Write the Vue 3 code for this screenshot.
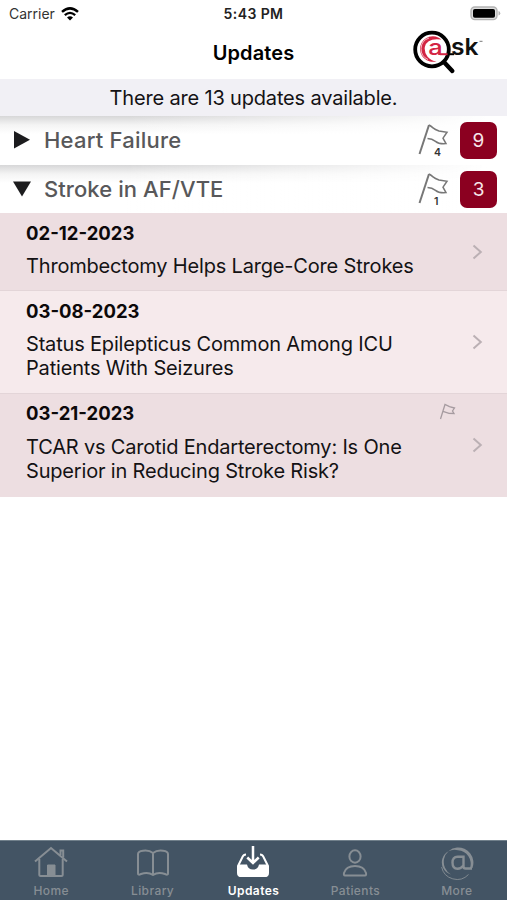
<template>
    <div class="screen">
        <div class="status-bar">
            <div class="carrier">
                <span class="carrier-name">Carrier</span>
                <svg class="wifi" width="18" height="14" viewBox="0 0 18 14">
                    <path d="M1 4.9 Q9 -2.1 17 4.9" fill="none" stroke="#000" stroke-width="2.5" />
                    <path d="M3.8 8.2 Q9 3.6 14.2 8.2" fill="none" stroke="#000" stroke-width="2.3" />
                    <path d="M9 13.6 L6 10.5 Q9 8 12 10.5 Z" />
                </svg>
            </div>
            <div class="time">5:43 PM</div>
            <div class="battery">
                <svg width="31" height="15" viewBox="0 0 31 15">
                    <rect x="1" y="1" width="26" height="12.6" rx="3.8" fill="#ddd" stroke="#b3b3b3" stroke-width="1.4" />
                    <rect x="3" y="3" width="22" height="8.8" rx="1.8" />
                    <path d="M28.5 5 Q30.3 5.6 30.3 7.3 Q30.3 9 28.5 9.6 Z" fill="#b3b3b3" />
                </svg>
            </div>
        </div>

        <div class="nav-bar">
            <h1 class="title">Updates</h1>
            <svg class="logo" width="72" height="46" viewBox="0 0 72 46">
                <path d="M31 31 L40.3 41" stroke="#000" stroke-width="4.4" stroke-linecap="round" />
                <circle cx="20" cy="19.5" r="16.8" fill="#fff" stroke="#000" stroke-width="3.8" />
                <path d="M29.5 9.5 A12.8 12.8 0 1 0 24.5 31.2 A12.6 12.6 0 0 1 12.8 17 Q15 7.5 29.5 9.5 Z" fill="#d32543" />
                <path d="M17 8 A11.5 11.5 0 0 0 16 29.5" fill="none" stroke="#fff" stroke-width="0.7" />
                <text class="logo-a" x="16.2" y="25" textLength="14.5" lengthAdjust="spacingAndGlyphs">a</text>
                <path d="M28 24.2 H35.5" stroke="#d32543" stroke-width="2" />
                <path d="M36 24.2 H42" stroke="#000" stroke-width="2" />
                <text class="logo-sk" x="39" y="25.2" textLength="27.5" lengthAdjust="spacingAndGlyphs">sk</text>
                <path d="M67.5 11.3 H70.5" stroke="#777" stroke-width="1" />
            </svg>
        </div>

        <div class="banner"><span>There are 13 updates available.</span></div>

        <template v-for="section in sections" :key="section.name">
            <div class="section" @click="section.open = !section.open">
                <svg class="arrow" width="20" height="20" viewBox="0 0 20 20">
                    <path v-if="section.open" d="M1 2.6 H19 L10 17.4 Z" />
                    <path v-else d="M2 1 L18 9.8 L2 18.6 Z" />
                </svg>
                <span class="section-name" :class="section.cls">{{ section.name }}</span>
                <div class="flag">
                    <svg width="32" height="34" viewBox="0 0 32 34">
                        <path d="M2.5 31 L12 2" stroke="#777" stroke-width="2" fill="none" />
                        <path d="M12 2 Q14 3.2 16 4.9 T22 8 L30 9.2 L26 15.2 L29 20.6 Q22 21.2 18.5 18.3 T10.5 15.4" stroke="#777" stroke-width="1.5" fill="none" />
                    </svg>
                    <span class="flag-count">{{ section.flagged }}</span>
                </div>
                <span class="badge">{{ section.count }}</span>
            </div>
            <template v-if="section.open">
                <div v-for="(item, index) in section.items" :key="item.date" class="item" :class="{ light: index % 2 === 1, last: index === section.items.length - 1 }">
                    <div class="item-body">
                        <div class="date">{{ item.date }}</div>
                        <div class="headline">
                            <div v-for="line in item.lines" :key="line">{{ line }}</div>
                        </div>
                    </div>
                    <svg v-if="item.flagged" class="item-flag" width="17" height="17" viewBox="0 0 17 17">
                        <path d="M1.5 16 L6 1.5 L10.5 3.6 L15.5 5 L13.5 8 L15 10.5 L10 10.3 L4 8.4" stroke="#a69ba0" stroke-width="1.3" fill="none" />
                    </svg>
                    <svg class="chevron" width="11" height="16" viewBox="0 0 11 16">
                        <path d="M1.5 1.5 L8.8 8 L1.5 14.5" stroke="#bbb0b4" stroke-width="2" fill="none" />
                    </svg>
                </div>
            </template>
        </template>

        <div class="tab-bar">
            <div v-for="tab in tabs" :key="tab" class="tab" :class="{ active: tab === current }" @click="current = tab">
                <svg width="36" height="36" viewBox="0 0 36 36" fill="none" stroke="currentColor" stroke-width="2">
                    <g v-if="tab === 'Home'">
                        <path d="M2 16.5 L18 3 L34 16.5" />
                        <path d="M6.3 14 V30 Q6.3 31 7.5 31 H28.5 Q29.7 31 29.7 30 V14 M27.5 10 V5.5 H30.2 V12.5" />
                        <path d="M14.5 30 V20 H22 V30 Z" fill="currentColor" stroke-width="1" />
                    </g>
                    <path v-else-if="tab === 'Library'" stroke-linejoin="round" d="M18 8 Q14 4.8 8 5.7 Q3 6.4 3 9 V28.5 Q3 30.5 6 29 Q13 26.5 18 30 Q23 26.5 30 29 Q33 30.5 33 28.5 V9 Q33 6.4 28 5.7 Q22 4.8 18 8 V30" />
                    <g v-else-if="tab === 'Updates'">
                        <path d="M11 9.5 Q8.5 9.5 7.5 12 L3 21 V28 Q3 31 6 31 H30 Q33 31 33 28 V21 L28.5 12 Q27.5 9.5 25 9.5" />
                        <path d="M3 19.5 H12 Q13 24.5 18 24.5 Q23 24.5 24 19.5 H33 V29 Q33 32 30 32 H6 Q3 32 3 29 Z" fill="currentColor" stroke="none" />
                        <path d="M18 1 V17.5 M12.3 12.5 L18 18 L23.7 12.5" stroke-width="2.5" />
                    </g>
                    <g v-else-if="tab === 'Patients'">
                        <ellipse cx="18" cy="11.5" rx="5.6" ry="6.2" />
                        <path stroke-linejoin="round" d="M8 30.5 Q6.5 30.5 7 28 Q9 21 18 21 Q27 21 29 28 Q29.5 30.5 28 30.5 Z" />
                    </g>
                    <g v-else>
                        <path d="M33.5 23 A15.3 15.3 0 0 0 18 2.5 A14.5 14.5 0 0 0 12 29.5 A12.5 12.5 0 0 1 19 5.2 A13.5 13.5 0 0 1 31 23 Z" fill="currentColor" fill-rule="evenodd" stroke="none" />
                        <path d="M33 23.5 H26.5 Q24.5 23.5 24.5 21.5 V11.8 H18.5 Q13.5 11.8 13.5 17.5 Q13.5 23.7 18.5 23.7 Q22 23.7 24.5 20.5" stroke-width="2.4" />
                        <path d="M2.6 22 A15.8 15.8 0 0 0 29.5 29.5" stroke-width=".9" />
                    </g>
                </svg>
                <span>{{ tab }}</span>
            </div>
        </div>
    </div>
</template>

<script setup>
import { ref } from 'vue';

const sections = ref([
    { name: 'Heart Failure', cls: 'heart', count: 9, flagged: 4, open: false, items: [] },
    {
        name: 'Stroke in AF/VTE',
        cls: 'stroke',
        count: 3,
        flagged: 1,
        open: true,
        items: [
            { date: '02-12-2023', lines: ['Thrombectomy Helps Large-Core Strokes'] },
            { date: '03-08-2023', lines: ['Status Epilepticus Common Among ICU', 'Patients With Seizures'] },
            { date: '03-21-2023', lines: ['TCAR vs Carotid Endarterectomy: Is One', 'Superior in Reducing Stroke Risk?'], flagged: true },
        ],
    },
]);

const tabs = ['Home', 'Library', 'Updates', 'Patients', 'More'];
const current = ref('Updates');
</script>

<style>
body {
    margin: 0;
    background: #fff;
}
</style>

<style scoped>
.screen {
    display: flex;
    flex-direction: column;
    height: 900px;
    font-family: Inter, "Liberation Sans", sans-serif;
    color: #141214;
    overflow: hidden;
}

.status-bar {
    display: grid;
    grid-template-columns: 1fr auto 1fr;
    align-items: center;
    height: 27px;
    padding: 0 6px 0 9px;
    flex-shrink: 0;
}

.carrier {
    display: flex;
    align-items: center;
    gap: 6px;
    font-size: 14px;
    color: #333;
}

.time {
    margin-right: 3px;
    font-size: 14px;
    font-weight: 600;
    letter-spacing: 0.4px;
    color: #222;
}

.battery {
    display: flex;
    justify-content: flex-end;
}

.nav-bar {
    display: grid;
    grid-template-columns: 1fr auto 1fr;
    align-items: center;
    height: 52px;
    flex-shrink: 0;
}

.title {
    grid-column: 2;
    margin: 0;
    font-size: 20px;
    font-weight: 600;
    letter-spacing: 0.1px;
    color: #000;
}

.logo {
    justify-self: end;
    margin-right: 23px;
}

.logo-a {
    font-size: 21.5px;
    font-weight: 500;
    fill: #d32543;
}

.logo-sk {
    font-size: 23px;
    font-weight: 600;
    fill: #111;
}

.banner {
    display: flex;
    align-items: center;
    justify-content: center;
    height: 37px;
    flex-shrink: 0;
    background: #f1f0f5;
    font-size: 20px;
    letter-spacing: -0.17px;
}

.section {
    display: flex;
    align-items: center;
    height: 48.7px;
    flex-shrink: 0;
    box-sizing: border-box;
    padding: 0 10px 0 12px;
    background: linear-gradient(to right, rgba(255, 255, 255, 0) 25%, #fff 96%), linear-gradient(#d7d7d8, #f4f4f4 9px, #fff 18px);
    cursor: pointer;
}

.arrow {
    fill: #1c1c1e;
}

.section-name {
    flex: 1;
    margin-left: 12px;
    font-size: 22px;
    font-weight: 500;
    color: #58585a;
}

.section-name.heart {
    letter-spacing: 0.22px;
}

.section-name.stroke {
    letter-spacing: 0.07px;
}

.flag {
    position: relative;
    width: 32px;
    height: 34px;
    margin-right: 11px;
}

.flag-count {
    position: absolute;
    left: 17px;
    top: 24px;
    font-size: 10.5px;
    line-height: 12px;
    font-weight: 600;
    color: #333;
}

.badge {
    display: flex;
    align-items: center;
    justify-content: center;
    width: 37px;
    height: 37px;
    border-radius: 7px;
    background: #8b0020;
    color: #f7e6ea;
    font-size: 19px;
}

.item {
    position: relative;
    display: flex;
    align-items: center;
    flex-shrink: 0;
    box-sizing: border-box;
    padding: 7.4px 24px 12px 26px;
    border-bottom: 1px solid #e3d5d8;
    background: #eddee1;
}

.item.light {
    background: #f6eaec;
}

.item.last {
    padding-top: 7.6px;
    padding-bottom: 13.4px;
    border-bottom: none;
}

.item-body {
    flex: 1;
}

.date {
    height: 24px;
    line-height: 24px;
    margin-bottom: 9.2px;
    font-size: 18.5px;
    font-weight: 700;
    color: #0c090a;
}

.headline {
    font-size: 20px;
    line-height: 24.4px;
    letter-spacing: -0.18px;
    white-space: nowrap;
}

.chevron {
    margin-top: 5px;
}

.item-flag {
    position: absolute;
    right: 51px;
    top: 9px;
}

.tab-bar {
    display: grid;
    grid-template-columns: repeat(5, 1fr);
    height: 60px;
    margin-top: auto;
    background: #435464;
    border-top: 1px solid #71808b;
    box-sizing: border-box;
}

.tab {
    display: flex;
    flex-direction: column;
    align-items: center;
    padding-top: 4px;
    padding-left: 1px;
    color: #878e94;
    font-size: 12px;
    line-height: 16px;
    font-weight: 500;
    letter-spacing: 0.4px;
    cursor: pointer;
}

.tab svg {
    margin-bottom: 2px;
}

.tab.active {
    padding-left: 0;
    color: #fff;
    font-weight: 600;
}
</style>
